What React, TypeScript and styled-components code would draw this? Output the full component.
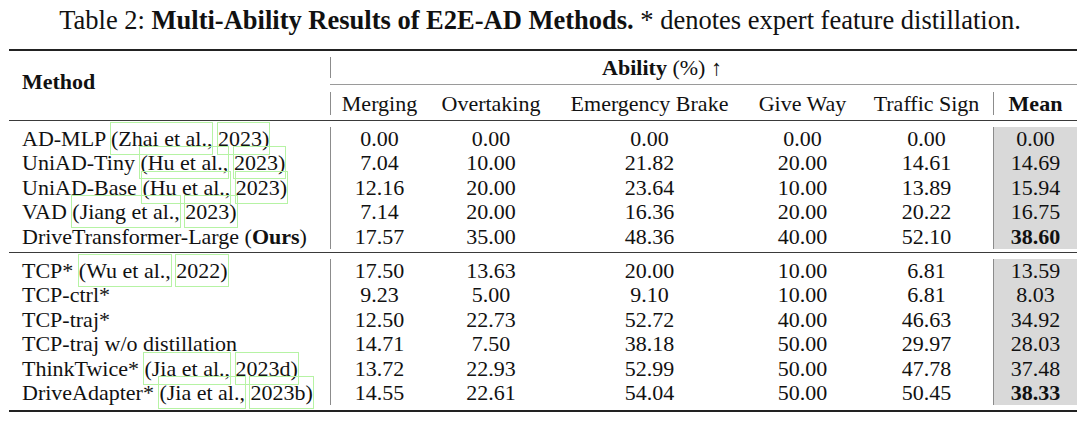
import styled, { createGlobalStyle } from "styled-components";
import type { ReactNode } from "react";

const GlobalStyle = createGlobalStyle`
  body {
    margin: 0;
    background: #fff;
    color: #111;
    font-family: "Liberation Serif", "Times New Roman", serif;
  }
`;

const COLS = "321px 98px 126px 191px 115px 133px 84px";

const Page = styled.main`
  width: 1080px;
  padding: 5px 3px 0 9px;
  box-sizing: border-box;
`;

const Caption = styled.p`
  margin: 0 0 14px -9px;
  width: 1080px;
  text-align: center;
  font-size: 26.5px;
  line-height: 30px;
  white-space: nowrap;

  & strong {
    font-weight: bold;
  }
`;

const Rule = styled.div<{ $weight?: number; $tone?: string; $gap?: number }>`
  height: ${(p) => p.$weight ?? 1}px;
  background: ${(p) => p.$tone ?? "#333"};
  margin-top: ${(p) => p.$gap ?? 0}px;
`;

const Head = styled.div`
  display: flex;
  font-size: 22px;
`;

const MethodHead = styled.div`
  width: 321px;
  padding: 0 0 8px 13px;
  box-sizing: border-box;
  display: flex;
  align-items: center;
  font-weight: bold;
`;

const HeadRight = styled.div`
  flex: 1;
  display: flex;
  flex-direction: column;
`;

const AbilityRow = styled.div`
  display: grid;
  grid-template-columns: 663px 84px;
  padding: 6px 0;
`;

const AbilityCell = styled.div`
  border-left: 1px solid #8c8c8c;
  height: 21px;
  line-height: 21px;
  text-align: center;
  white-space: nowrap;

  & b {
    font-weight: bold;
  }
`;

const SubHeadRow = styled.div`
  display: grid;
  grid-template-columns: 98px 126px 191px 115px 133px 84px;
  padding: 7px 0 5px;
`;

const SubHead = styled.div<{ $line?: boolean; $bold?: boolean }>`
  height: 23px;
  line-height: 23px;
  text-align: center;
  white-space: nowrap;
  border-left: ${(p) => (p.$line ? "1px solid #8c8c8c" : "none")};
  font-weight: ${(p) => (p.$bold ? "bold" : "normal")};
`;

const Group = styled.div<{ $gap: number }>`
  margin-top: ${(p) => p.$gap}px;
  font-size: 22px;
`;

const Row = styled.div`
  display: grid;
  grid-template-columns: ${COLS};
  height: 24.4px;
  line-height: 24.4px;
`;

const MethodCell = styled.div`
  padding-left: 13px;
  white-space: nowrap;

  & b {
    font-weight: bold;
  }
`;

const Num = styled.div<{ $line?: boolean }>`
  text-align: center;
  border-left: ${(p) => (p.$line ? "1px solid #8c8c8c" : "none")};
`;

const Mean = styled.div<{ $bold?: boolean }>`
  text-align: center;
  background: #d9d9d9;
  border-left: 1px solid #8c8c8c;
  font-weight: ${(p) => (p.$bold ? "bold" : "normal")};
`;

const Link = styled.span`
  padding: 3px 0;
  outline: 1px solid #b6f3a4;
`;

function Cite({ who, year }: { who: string; year: string }) {
  return (
    <>
      <Link>({who}</Link> <Link>{year})</Link>
    </>
  );
}

type Entry = {
  method: ReactNode;
  values: string[];
  mean: string;
  best?: boolean;
};

const e2e: Entry[] = [
  {
    method: <>AD-MLP <Cite who="Zhai et al.," year="2023" /></>,
    values: ["0.00", "0.00", "0.00", "0.00", "0.00"],
    mean: "0.00",
  },
  {
    method: <>UniAD-Tiny <Cite who="Hu et al.," year="2023" /></>,
    values: ["7.04", "10.00", "21.82", "20.00", "14.61"],
    mean: "14.69",
  },
  {
    method: <>UniAD-Base <Cite who="Hu et al.," year="2023" /></>,
    values: ["12.16", "20.00", "23.64", "10.00", "13.89"],
    mean: "15.94",
  },
  {
    method: <>VAD <Cite who="Jiang et al.," year="2023" /></>,
    values: ["7.14", "20.00", "16.36", "20.00", "20.22"],
    mean: "16.75",
  },
  {
    method: <>DriveTransformer-Large (<b>Ours</b>)</>,
    values: ["17.57", "35.00", "48.36", "40.00", "52.10"],
    mean: "38.60",
    best: true,
  },
];

const distilled: Entry[] = [
  {
    method: <>TCP* <Cite who="Wu et al.," year="2022" /></>,
    values: ["17.50", "13.63", "20.00", "10.00", "6.81"],
    mean: "13.59",
  },
  {
    method: "TCP-ctrl*",
    values: ["9.23", "5.00", "9.10", "10.00", "6.81"],
    mean: "8.03",
  },
  {
    method: "TCP-traj*",
    values: ["12.50", "22.73", "52.72", "40.00", "46.63"],
    mean: "34.92",
  },
  {
    method: "TCP-traj w/o distillation",
    values: ["14.71", "7.50", "38.18", "50.00", "29.97"],
    mean: "28.03",
  },
  {
    method: <>ThinkTwice* <Cite who="Jia et al.," year="2023d" /></>,
    values: ["13.72", "22.93", "52.99", "50.00", "47.78"],
    mean: "37.48",
  },
  {
    method: <>DriveAdapter* <Cite who="Jia et al.," year="2023b" /></>,
    values: ["14.55", "22.61", "54.04", "50.00", "50.45"],
    mean: "38.33",
    best: true,
  },
];

const abilities = ["Merging", "Overtaking", "Emergency Brake", "Give Way", "Traffic Sign"];

function Rows({ entries }: { entries: Entry[] }) {
  return (
    <>
      {entries.map((e, i) => (
        <Row key={i}>
          <MethodCell>{e.method}</MethodCell>
          {e.values.map((v, j) => (
            <Num key={j} $line={j === 0}>
              {v}
            </Num>
          ))}
          <Mean $bold={e.best}>{e.mean}</Mean>
        </Row>
      ))}
    </>
  );
}

export default function App() {
  return (
    <>
      <GlobalStyle />
      <Page>
        <Caption>
          Table 2: <strong>Multi-Ability Results of E2E-AD Methods.</strong> * denotes
          expert feature distillation.
        </Caption>
        <Rule $weight={2} $tone="#222" />
        <Head>
          <MethodHead>Method</MethodHead>
          <HeadRight>
            <AbilityRow>
              <AbilityCell>
                <b>Ability</b> (%) ↑
              </AbilityCell>
              <div />
            </AbilityRow>
            <Rule $tone="#9a9a9a" />
            <SubHeadRow>
              {abilities.map((a, i) => (
                <SubHead key={a} $line={i === 0}>
                  {a}
                </SubHead>
              ))}
              <SubHead $line $bold>
                Mean
              </SubHead>
            </SubHeadRow>
          </HeadRight>
        </Head>
        <Rule $tone="#3a3a3a" />
        <Group $gap={6}>
          <Rows entries={e2e} />
        </Group>
        <Rule $tone="#3a3a3a" $gap={3} />
        <Group $gap={6}>
          <Rows entries={distilled} />
        </Group>
        <Rule $weight={2} $tone="#222" $gap={5} />
      </Page>
    </>
  );
}
